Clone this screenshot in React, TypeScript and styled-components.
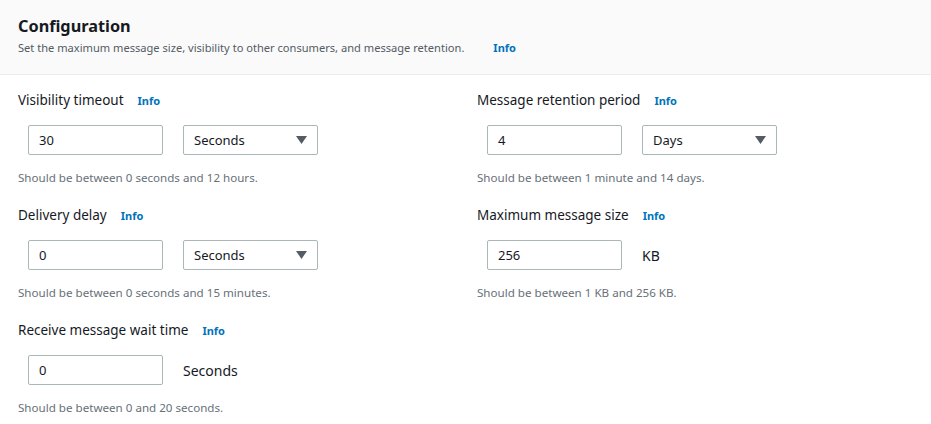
import React from "react";
import styled, { createGlobalStyle } from "styled-components";

const Global = createGlobalStyle`
  html, body {
    margin: 0;
    padding: 0;
    background: #ffffff;
    font-family: "Noto Sans", "Open Sans", sans-serif;
    color: #16191f;
  }
`;

const Header = styled.div`
  background: #fafafa;
  border-bottom: 1px solid #eaeded;
  padding: 14px 18px 18px;
`;

const Title = styled.h2`
  margin: 0 0 2px;
  font-size: 16.3px;
  line-height: 24px;
  font-weight: 700;
  color: #16191f;
`;

const Description = styled.div`
  font-size: 11.1px;
  line-height: 16px;
  color: #545b64;
`;

const InfoLink = styled.span<{ $gap?: number }>`
  margin-left: ${({ $gap }) => $gap ?? 14}px;
  font-size: 11px;
  font-weight: 700;
  color: #0073bb;
`;

const Grid = styled.div`
  display: grid;
  grid-template-columns: 459px 1fr;
  padding: 15px 18px 0;
  row-gap: 19px;
`;

const Field = styled.div`
  display: flex;
  flex-direction: column;
`;

const Label = styled.div`
  font-size: 13.5px;
  line-height: 20px;
  color: #16191f;
  display: flex;
  align-items: baseline;
`;

const Controls = styled.div`
  display: flex;
  align-items: center;
  gap: 20px;
  margin: 14px 0 15px 10px;
`;

const Box = styled.div`
  box-sizing: border-box;
  width: 135px;
  height: 30px;
  border: 1px solid #aab7b8;
  border-radius: 2px;
  padding: 0 10px;
  display: flex;
  align-items: center;
  justify-content: space-between;
  font-size: 13px;
  color: #16191f;
  background: #ffffff;
`;

const Unit = styled.span`
  font-size: 14px;
  color: #16191f;
`;

const Hint = styled.div`
  font-size: 11.6px;
  line-height: 16px;
  color: #687078;
`;

const Caret = () => (
  <svg width="11" height="8" viewBox="0 0 11 8">
    <polygon points="0,0 11,0 5.5,8" fill="#545b64" />
  </svg>
);

type Props = {
  label: string;
  value: string;
  select?: string;
  unit?: string;
  hint: string;
};

const ConfigField = ({ label, value, select, unit, hint }: Props) => (
  <Field>
    <Label>
      {label}
      <InfoLink>Info</InfoLink>
    </Label>
    <Controls>
      <Box>{value}</Box>
      {select && (
        <Box>
          {select}
          <Caret />
        </Box>
      )}
      {unit && <Unit>{unit}</Unit>}
    </Controls>
    <Hint>{hint}</Hint>
  </Field>
);

const App = () => (
  <>
    <Global />
    <Header>
      <Title>Configuration</Title>
      <Description>
        Set the maximum message size, visibility to other consumers, and message retention.
        <InfoLink $gap={29}>Info</InfoLink>
      </Description>
    </Header>
    <Grid>
      <ConfigField
        label="Visibility timeout"
        value="30"
        select="Seconds"
        hint="Should be between 0 seconds and 12 hours."
      />
      <ConfigField
        label="Message retention period"
        value="4"
        select="Days"
        hint="Should be between 1 minute and 14 days."
      />
      <ConfigField
        label="Delivery delay"
        value="0"
        select="Seconds"
        hint="Should be between 0 seconds and 15 minutes."
      />
      <ConfigField
        label="Maximum message size"
        value="256"
        unit="KB"
        hint="Should be between 1 KB and 256 KB."
      />
      <ConfigField
        label="Receive message wait time"
        value="0"
        unit="Seconds"
        hint="Should be between 0 and 20 seconds."
      />
    </Grid>
  </>
);

export default App;
